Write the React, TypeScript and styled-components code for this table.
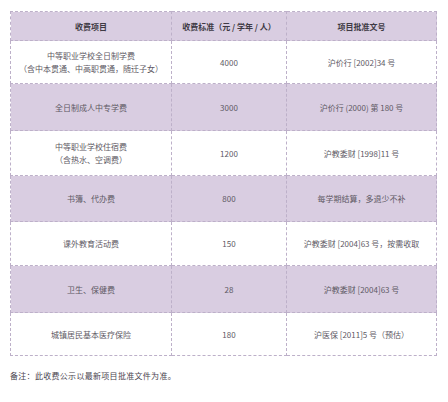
import React from 'react';
import styled, { createGlobalStyle } from 'styled-components';

const GlobalStyle = createGlobalStyle`
  html, body {
    margin: 0;
    padding: 0;
    background: #fff;
  }
  body {
    font-family: 'Noto Sans CJK SC', 'Noto Sans', sans-serif;
  }
`;

const Page = styled.div`
  width: 448px;
  height: 402px;
  padding: 11px 15px 0 10px;
  box-sizing: border-box;
`;

const FeeTable = styled.table`
  width: 423px;
  border-collapse: collapse;
  border: 1px dashed #bdb0c9;
  table-layout: fixed;
`;

const HeadCell = styled.th<{ $w: number }>`
  width: ${({ $w }) => $w}px;
  height: 28px;
  padding: 0;
  background: #d9cde1;
  border: 1px dashed #bdb0c9;
  color: #3f3a44;
  font-size: 8px;
  font-weight: bold;
  text-align: center;
  vertical-align: middle;
`;

const Row = styled.tr<{ $shade: boolean; $h: number }>`
  height: ${({ $h }) => $h}px;
  background: ${({ $shade }) => ($shade ? '#d9cde1' : '#ffffff')};
`;

const Cell = styled.td`
  padding: 0 4px;
  border: 1px dashed #bdb0c9;
  color: #5e5964;
  font-size: 8px;
  line-height: 13px;
  text-align: center;
  vertical-align: middle;
`;

const Note = styled.p`
  margin: 14px 0 0;
  font-size: 8px;
  color: #4a4550;
  letter-spacing: 0.3px;
`;

const rows = [
  { item: ['中等职业学校全日制学费', '（含中本贯通、中高职贯通，随迁子女）'], fee: '4000', doc: '沪价行 [2002]34 号', h: 43 },
  { item: ['全日制成人中专学费'], fee: '3000', doc: '沪价行 (2000) 第 180 号', h: 47 },
  { item: ['中等职业学校住宿费', '（含热水、空调费）'], fee: '1200', doc: '沪教委财 [1998]11 号', h: 45 },
  { item: ['书簿、代办费'], fee: '800', doc: '每学期结算，多退少不补', h: 46 },
  { item: ['课外教育活动费'], fee: '150', doc: '沪教委财 [2004]63 号，按需收取', h: 44 },
  { item: ['卫生、保健费'], fee: '28', doc: '沪教委财 [2004]63 号', h: 47 },
  { item: ['城镇居民基本医疗保险'], fee: '180', doc: '沪医保 [2011]5 号（预估）', h: 43 },
];

export default function App() {
  return (
    <Page>
      <GlobalStyle />
      <FeeTable>
        <thead>
          <tr>
            <HeadCell $w={160}>收费项目</HeadCell>
            <HeadCell $w={114}>收费标准（元 / 学年 / 人）</HeadCell>
            <HeadCell $w={149}>项目批准文号</HeadCell>
          </tr>
        </thead>
        <tbody>
          {rows.map((r, i) => (
            <Row key={i} $shade={i % 2 === 1} $h={r.h}>
              <Cell>
                {r.item.map((line, j) => (
                  <div key={j}>{line}</div>
                ))}
              </Cell>
              <Cell>{r.fee}</Cell>
              <Cell>{r.doc}</Cell>
            </Row>
          ))}
        </tbody>
      </FeeTable>
      <Note>备注：此收费公示以最新项目批准文件为准。</Note>
    </Page>
  );
}
